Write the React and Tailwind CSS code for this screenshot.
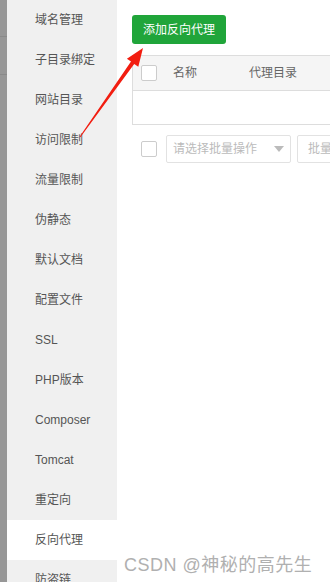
const menu = [
  '域名管理',
  '子目录绑定',
  '网站目录',
  '访问限制',
  '流量限制',
  '伪静态',
  '默认文档',
  '配置文件',
  'SSL',
  'PHP版本',
  'Composer',
  'Tomcat',
  '重定向',
  '反向代理',
  '防盗链',
];

const font = { fontFamily: '"Liberation Sans", "Noto Sans CJK SC", sans-serif' };

function Check() {
  return <span className="block h-[16px] w-[16px] shrink-0 rounded-[2px] border border-[#cccccc] bg-white" />;
}

function Arrow() {
  return (
    <svg className="pointer-events-none absolute left-0 top-0" width="330" height="582">
      <polygon
        points="79.6,136.7 131,61.5 126.9,58.7 143,48 138.3,66.7 134.2,63.9 80.4,137.3"
        fill="#f21d10"
      />
    </svg>
  );
}

export default function App() {
  return (
    <div className="relative flex h-[582px] w-[330px] overflow-hidden bg-white" style={font}>
      <div className="flex w-[7px] shrink-0 flex-col bg-[#979797]">
        <div className="h-[37px] border-b border-[#8a8a8a]" />
        <div className="h-[38px] border-b border-[#8a8a8a]" />
      </div>

      <div className="w-[110px] shrink-0 bg-[#f0f0f0]">
        {menu.map((m) => (
          <div
            key={m}
            className={`flex h-[40px] items-center pl-[28px] text-[12px] text-[#555555] ${
              m === '反向代理' ? 'bg-white' : ''
            }`}
          >
            {m}
          </div>
        ))}
      </div>

      <div className="min-w-0 flex-1 pl-[15px] pt-[15px]">
        <button className="h-[29px] w-[94px] rounded-[3px] bg-[#20a53a] text-[12px] text-white">
          添加反向代理
        </button>

        <div className="mt-[11px] w-[600px] border border-[#dddddd]">
          <div className="flex h-[35px] items-center border-b border-[#dddddd] bg-[#f5f5f5] text-[12px] text-[#666666]">
            <div className="pl-[8px]">
              <Check />
            </div>
            <div className="w-[92px] pl-[16px]">名称</div>
            <div>代理目录</div>
          </div>
          <div className="h-[33px] bg-white" />
        </div>

        <div className="mt-[10px] flex items-center">
          <div className="pl-[9px] pr-[9px]">
            <Check />
          </div>
          <div className="flex h-[28px] w-[125px] shrink-0 items-center justify-between rounded-[2px] border border-[#e2e2e2] pl-[6px] pr-[6px] text-[12px] text-[#bbbbbb]">
            <span>请选择批量操作</span>
            <span className="h-0 w-0 border-x-[5px] border-t-[6px] border-x-transparent border-t-[#bbbbbb]" />
          </div>
          <div className="ml-[6px] flex h-[28px] w-[100px] shrink-0 items-center rounded-[2px] border border-[#e2e2e2] pl-[10px] text-[12px] text-[#bbbbbb]">
            批量操作
          </div>
        </div>
      </div>

      <Arrow />

      <div
        className="pointer-events-none absolute left-[124px] top-[552px] text-[18px] tracking-[0.5px] text-[#b0b0b0]"
        style={{ textShadow: '0 0 2px #ffffff' }}
      >
        CSDN @神秘的高先生
      </div>
    </div>
  );
}
